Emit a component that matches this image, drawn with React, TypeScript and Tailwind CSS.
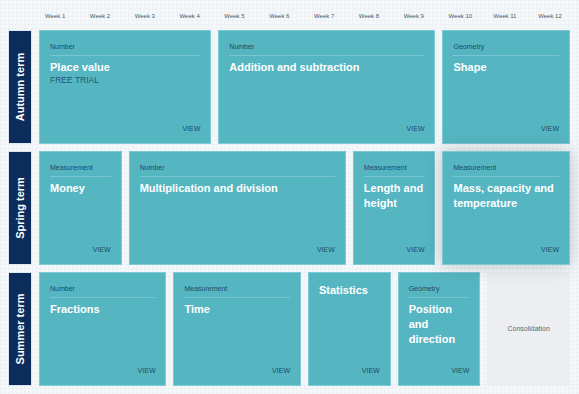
import React from "react";

type Card = {
  cls: string;
  cat?: string;
  title: string;
  sub?: string;
  view?: boolean;
  shadow?: boolean;
  consolidation?: boolean;
};

const cards: Card[] = [
  { cls: "col-start-2 col-span-4 row-start-2", cat: "Number", title: "Place value", sub: "FREE TRIAL", view: true },
  { cls: "col-start-6 col-span-5 row-start-2", cat: "Number", title: "Addition and subtraction", view: true },
  { cls: "col-start-11 col-span-3 row-start-2", cat: "Geometry", title: "Shape", view: true },
  { cls: "col-start-2 col-span-2 row-start-3", cat: "Measurement", title: "Money", view: true },
  { cls: "col-start-4 col-span-5 row-start-3", cat: "Number", title: "Multiplication and division", view: true },
  { cls: "col-start-9 col-span-2 row-start-3", cat: "Measurement", title: "Length and height", view: true },
  { cls: "col-start-11 col-span-3 row-start-3", cat: "Measurement", title: "Mass, capacity and temperature", view: true, shadow: true },
  { cls: "col-start-2 col-span-3 row-start-4", cat: "Number", title: "Fractions", view: true },
  { cls: "col-start-5 col-span-3 row-start-4", cat: "Measurement", title: "Time", view: true },
  { cls: "col-start-8 col-span-2 row-start-4", title: "Statistics", view: true },
  { cls: "col-start-10 col-span-2 row-start-4", cat: "Geometry", title: "Position and direction", view: true },
  { cls: "col-start-12 col-span-2 row-start-4", title: "Consolidation", consolidation: true },
];

const terms = [
  { cls: "row-start-2", label: "Autumn term" },
  { cls: "row-start-3", label: "Spring term" },
  { cls: "row-start-4", label: "Summer term" },
];

const weeks = Array.from({ length: 12 }, (_, i) => `Week ${i + 1}`);
const weekCols = [
  "col-start-2", "col-start-3", "col-start-4", "col-start-5", "col-start-6", "col-start-7",
  "col-start-8", "col-start-9", "col-start-10", "col-start-11", "col-start-12", "col-start-13",
];

function CardView({ c }: { c: Card }) {
  if (c.consolidation) {
    return (
      <div className={`${c.cls} flex items-center justify-center bg-[#eceef2] text-[7px] leading-[10px] text-[#5b6672]`}>
        {c.title}
      </div>
    );
  }
  return (
    <div
      className={`${c.cls} relative flex flex-col border border-[#7ccad3] bg-[#55b6c2] px-[10px] pt-[11px] pb-[9px] ${
        c.shadow ? "z-10 shadow-[0_0_18px_rgba(0,0,0,0.22)]" : ""
      }`}
    >
      {c.cat ? (
        <div className="border-b border-[#78c6cf] pb-[3px] text-[7px] leading-[10px] text-[#1c4a66]">{c.cat}</div>
      ) : null}
      <div
        className={`${c.cat ? "mt-[4px]" : "-mt-[1px]"} text-[11px] font-bold leading-[15px] text-white`}
      >
        {c.title}
      </div>
      {c.sub ? <div className="text-[8.5px] font-normal leading-[10px] text-[#235570]">{c.sub}</div> : null}
      <div className="flex-1" />
      {c.view ? <div className="text-right text-[7px] leading-[10px] text-[#1c4a66]">VIEW</div> : null}
    </div>
  );
}

export default function App() {
  return (
    <div
      className="h-[394px] w-[579px] overflow-hidden bg-[#f5f8fa] bg-[linear-gradient(to_right,#eef2f5_1px,transparent_1px),linear-gradient(to_bottom,#eef2f5_1px,transparent_1px)] bg-[size:4px_4px] pl-[8px] pr-[9px]"
      style={{ fontFamily: '"Liberation Sans", Arial, sans-serif' }}
    >
      <div className="grid grid-cols-[24px_repeat(12,minmax(0,1fr))] grid-rows-[23px_114px_114px_114px] gap-[7px]">
        {weeks.map((w, i) => (
          <div
            key={w}
            className={`${weekCols[i]} row-start-1 whitespace-nowrap pl-[6px] pt-[11px] text-[6px] leading-[10px] text-[#4a5868]`}
          >
            {w}
          </div>
        ))}
        {terms.map((t) => (
          <div
            key={t.label}
            className={`${t.cls} col-start-1 flex items-center justify-center border border-[#dfe6ee] bg-[#0c2d5b]`}
          >
            <div className="-rotate-90 whitespace-nowrap text-[11px] font-bold leading-[14px] text-white">
              {t.label}
            </div>
          </div>
        ))}
        {cards.map((c) => (
          <CardView key={c.title} c={c} />
        ))}
      </div>
    </div>
  );
}
